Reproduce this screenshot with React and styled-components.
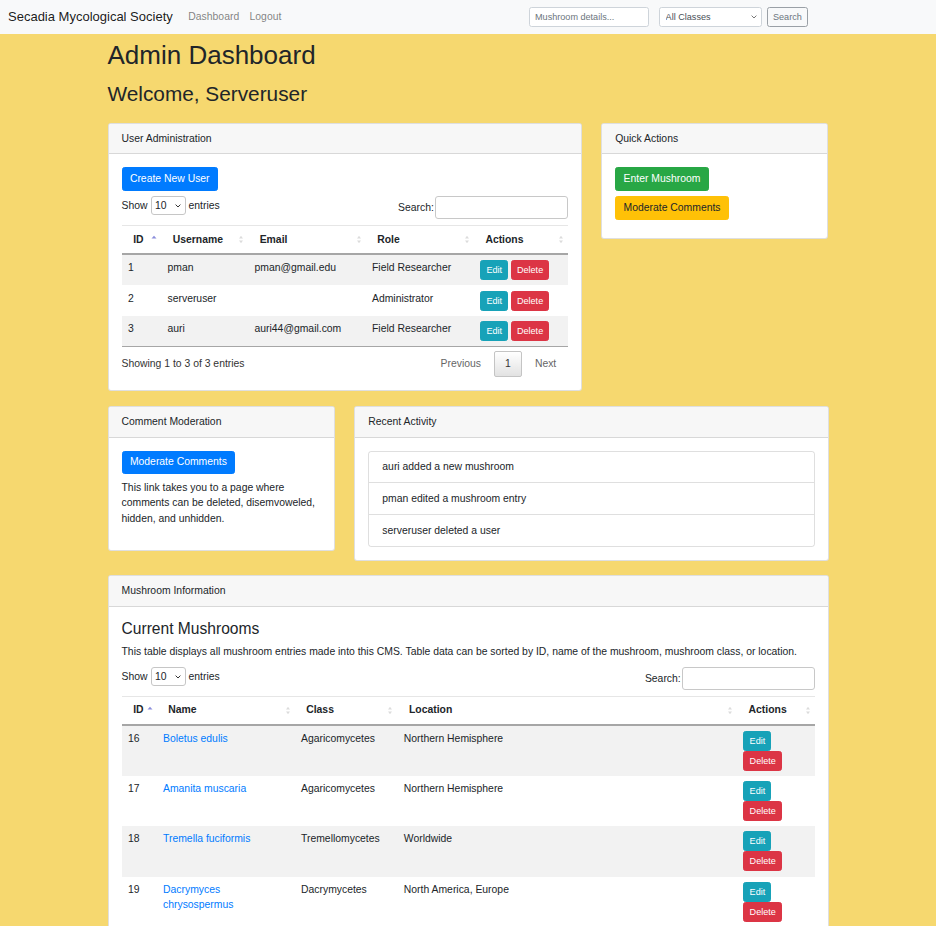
import React from 'react';
import styled, { createGlobalStyle } from 'styled-components';

const GlobalStyle = createGlobalStyle`
  html { scrollbar-width: none; }
  html::-webkit-scrollbar, body::-webkit-scrollbar { display: none; }
  * { box-sizing: border-box; }
  body {
    margin: 0;
    background: #f6d86f;
    font-family: "Liberation Sans", Arial, sans-serif;
    font-size: 10.4px;
    line-height: 15.6px;
    color: #212529;
  }
`;

/* ---------- Navbar ---------- */
const Navbar = styled.nav`
  display: flex;
  align-items: center;
  height: 34px;
  padding-left: 8px;
  background: #f8f9fa;
`;
const Brand = styled.a`
  font-size: 13px;
  line-height: 19.5px;
  color: rgba(0, 0, 0, 0.9);
  text-decoration: none;
  margin-right: 10.4px;
`;
const NavLinks = styled.div`
  display: flex;
  flex: 1;
`;
const NavLink = styled.a`
  padding: 0 5.2px;
  color: rgba(0, 0, 0, 0.5);
  text-decoration: none;
`;
const NavForm = styled.form`
  display: flex;
  align-items: center;
  margin-right: 128px;
`;
const NavInput = styled.input`
  width: 120.6px;
  height: 19.4px;
  padding: 0 5.2px;
  border: 1px solid #ced4da;
  border-radius: 2.6px;
  font: 9.1px "Liberation Sans", Arial, sans-serif;
  color: #495057;
  background: #fff;
  margin-right: 10px;
  &::placeholder { color: #6c757d; }
`;
const SelectWrap = styled.div`
  position: relative;
  display: inline-flex;
`;
const NavSelect = styled.select`
  appearance: none;
  width: 102.4px;
  height: 19.4px;
  padding: 0 5.2px;
  border: 1px solid #ced4da;
  border-radius: 2.6px;
  font: 9.1px "Liberation Sans", Arial, sans-serif;
  color: #495057;
  background: #fff;
`;
const Chevron = styled.svg`
  position: absolute;
  right: ${p => p.$right}px;
  top: 50%;
  margin-top: -2px;
  pointer-events: none;
`;
const NavButton = styled.button`
  height: 20px;
  margin-left: 5px;
  padding: 0 5.2px;
  border: 1px solid #9aa0a6;
  border-radius: 2.6px;
  background: #f8f9fa;
  color: #6c757d;
  font: 9.1px "Liberation Sans", Arial, sans-serif;
`;

/* ---------- Page ---------- */
const Container = styled.main`
  width: 721px;
  margin: 0 auto;
  padding-top: 5.7px;
`;
const Title = styled.h1`
  margin: 0 0 11px;
  font-size: 26px;
  line-height: 1.2;
  font-weight: 500;
`;
const Welcome = styled.h2`
  margin: 0 0 16px;
  font-size: 20.8px;
  line-height: 1.2;
  font-weight: 500;
`;
const Row = styled.div`
  display: grid;
  grid-template-columns: repeat(12, 1fr);
  column-gap: 19.5px;
  align-items: start;
  margin-bottom: 14.5px;
`;
const Col = styled.div`
  grid-column: span ${p => p.$span};
`;
const Card = styled.section`
  background: #fff;
  border: 1px solid rgba(0, 0, 0, 0.125);
  border-radius: 3px;
  overflow: hidden;
`;
const CardHeader = styled.div`
  padding: 7px 13px;
  background: #f7f7f7;
  border-bottom: 1px solid rgba(0, 0, 0, 0.125);
`;
const CardBody = styled.div`
  padding: 13px;
`;
const Btn = styled.button`
  display: block;
  height: 23.4px;
  margin-bottom: 5.6px;
  padding: 0 7.4px;
  border: 1px solid ${p => p.$bg};
  border-radius: 2.6px;
  background: ${p => p.$bg};
  color: ${p => p.$fg || '#fff'};
  font: 10.4px/15.6px "Liberation Sans", Arial, sans-serif;
`;
const SmallBtn = styled.button`
  height: 20px;
  padding: 0 5.2px;
  border: 1px solid ${p => p.$bg};
  border-radius: 2.6px;
  background: ${p => p.$bg};
  color: #fff;
  font: 9.1px/18px "Liberation Sans", Arial, sans-serif;
`;
const BtnGroup = styled.div`
  display: flex;
  flex-direction: ${p => (p.$stack ? 'column' : 'row')};
  align-items: flex-start;
  gap: ${p => (p.$stack ? '0' : '2.5px')};
`;
const Paragraph = styled.p`
  margin: 0 0 ${p => p.$mb}px;
`;
const SubTitle = styled.h4`
  margin: 0 0 5.2px;
  font-size: 15.6px;
  line-height: 1.2;
  font-weight: 500;
`;

/* ---------- DataTable ---------- */
const DtTop = styled.div`
  display: flex;
  justify-content: space-between;
  align-items: flex-start;
`;
const DtLength = styled.label`
  display: flex;
  align-items: center;
  gap: 3px;
`;
const LenSelect = styled.select`
  appearance: none;
  width: 35px;
  height: 18.3px;
  padding: 0 3.4px;
  border: 1px solid #c6c6c6;
  border-radius: 3px;
  background: #fff;
  color: #212529;
  font: 10.4px "Liberation Sans", Arial, sans-serif;
`;
const DtFilter = styled.label`
  display: flex;
  align-items: center;
  gap: 1.5px;
`;
const FilterInput = styled.input`
  width: 132.3px;
  height: 22.6px;
  border: 1px solid #c8c8c8;
  border-radius: 3px;
  background: #fff;
`;
const Table = styled.table`
  width: 100%;
  margin-top: ${p => p.$mt}px;
  border-collapse: collapse;
  table-layout: fixed;
  border-bottom: 1.5px solid #a6a6a6;
`;
const Th = styled.th`
  padding: 5.7px 4px 5.7px 11.7px;
  border-top: 1px solid #e6e6e6;
  border-bottom: 2px solid #a6a6a6;
  text-align: left;
  font-weight: bold;
  vertical-align: bottom;
`;
const ThInner = styled.div`
  display: flex;
  align-items: center;
  justify-content: space-between;
`;
const Tr = styled.tr`
  background: ${p => (p.$striped ? '#f2f2f2' : '#fff')};
`;
const Td = styled.td`
  padding: 5.2px 6.5px;
  vertical-align: top;
`;
const NameLink = styled.a`
  color: #007bff;
  text-decoration: none;
`;
const DtBottom = styled.div`
  display: flex;
  justify-content: space-between;
  align-items: center;
  margin-top: 4px;
  color: #333;
`;
const Pager = styled.div`
  display: flex;
  gap: 1.3px;
`;
const PageBtn = styled.span`
  padding: 4.4px 10.4px;
  border: 1px solid ${p => (p.$current ? '#c4c4c4' : 'transparent')};
  border-radius: 2px;
  background: ${p => (p.$current ? 'linear-gradient(#ffffff, #e2e2e2)' : 'transparent')};
  color: ${p => (p.$current ? '#333' : '#666')};
`;

/* ---------- List group ---------- */
const ListGroup = styled.ul`
  margin: 0;
  padding: 0;
  list-style: none;
  border: 1px solid rgba(0, 0, 0, 0.125);
  border-radius: 3px;
`;
const ListItem = styled.li`
  padding: 7.6px 13px;
  & + & { border-top: 1px solid rgba(0, 0, 0, 0.125); }
`;

const SortIcon = ({ asc }) =>
  asc ? (
    <svg width="6" height="9" viewBox="0 0 6 9">
      <path d="M0.5 3.6 L3 0.8 L5.5 3.6 Z" fill="#8b8edb" />
    </svg>
  ) : (
    <svg width="6" height="9" viewBox="0 0 6 9">
      <path d="M1 3.6 L3 0.8 L5 3.6 Z M1 5.4 L3 8.2 L5 5.4 Z" fill="#dcdcdc" />
    </svg>
  );

const ChevronIcon = ({ right, color }) => (
  <Chevron $right={right} width="6" height="4" viewBox="0 0 6 4">
    <path d="M0.6 0.6 L3 3 L5.4 0.6" fill="none" stroke={color} strokeWidth="1" />
  </Chevron>
);

const HeaderCell = ({ label, asc }) => (
  <Th>
    <ThInner>
      <span>{label}</span>
      <SortIcon asc={asc} />
    </ThInner>
  </Th>
);

const LengthControl = () => (
  <DtLength>
    Show
    <SelectWrap>
      <LenSelect defaultValue="10">
        <option>10</option>
        <option>25</option>
      </LenSelect>
      <ChevronIcon right={5} color="#333" />
    </SelectWrap>
    entries
  </DtLength>
);

const FilterControl = () => (
  <DtFilter>
    Search:
    <FilterInput type="search" />
  </DtFilter>
);

const users = [
  { id: 1, name: 'pman', email: 'pman@gmail.edu', role: 'Field Researcher' },
  { id: 2, name: 'serveruser', email: '', role: 'Administrator' },
  { id: 3, name: 'auri', email: 'auri44@gmail.com', role: 'Field Researcher' },
];

const mushrooms = [
  { id: 16, name: 'Boletus edulis', cls: 'Agaricomycetes', loc: 'Northern Hemisphere' },
  { id: 17, name: 'Amanita muscaria', cls: 'Agaricomycetes', loc: 'Northern Hemisphere' },
  { id: 18, name: 'Tremella fuciformis', cls: 'Tremellomycetes', loc: 'Worldwide' },
  { id: 19, name: 'Dacrymyces chrysospermus', cls: 'Dacrymycetes', loc: 'North America, Europe' },
];

const activity = ['auri added a new mushroom', 'pman edited a mushroom entry', 'serveruser deleted a user'];

export default function App() {
  return (
    <>
      <GlobalStyle />
      <Navbar>
        <Brand href="#">Secadia Mycological Society</Brand>
        <NavLinks>
          <NavLink href="#">Dashboard</NavLink>
          <NavLink href="#">Logout</NavLink>
        </NavLinks>
        <NavForm onSubmit={e => e.preventDefault()}>
          <NavInput placeholder="Mushroom details..." />
          <SelectWrap>
            <NavSelect defaultValue="all">
              <option value="all">All Classes</option>
            </NavSelect>
            <ChevronIcon right={5} color="#777" />
          </SelectWrap>
          <NavButton type="submit">Search</NavButton>
        </NavForm>
      </Navbar>

      <Container>
        <Title>Admin Dashboard</Title>
        <Welcome>Welcome, Serveruser</Welcome>

        <Row>
          <Col $span={8}>
            <Card>
              <CardHeader>User Administration</CardHeader>
              <CardBody>
                <Btn $bg="#007bff">Create New User</Btn>
                <DtTop>
                  <LengthControl />
                  <FilterControl />
                </DtTop>
                <Table $mt={6}>
                  <colgroup>
                    <col style={{ width: '39.5px' }} />
                    <col style={{ width: '87px' }} />
                    <col style={{ width: '117.5px' }} />
                    <col style={{ width: '108.2px' }} />
                    <col />
                  </colgroup>
                  <thead>
                    <tr>
                      <HeaderCell label="ID" asc />
                      <HeaderCell label="Username" />
                      <HeaderCell label="Email" />
                      <HeaderCell label="Role" />
                      <HeaderCell label="Actions" />
                    </tr>
                  </thead>
                  <tbody>
                    {users.map((u, i) => (
                      <Tr key={u.id} $striped={i % 2 === 0}>
                        <Td>{u.id}</Td>
                        <Td>{u.name}</Td>
                        <Td>{u.email}</Td>
                        <Td>{u.role}</Td>
                        <Td>
                          <BtnGroup>
                            <SmallBtn $bg="#17a2b8">Edit</SmallBtn>
                            <SmallBtn $bg="#dc3545">Delete</SmallBtn>
                          </BtnGroup>
                        </Td>
                      </Tr>
                    ))}
                  </tbody>
                </Table>
                <DtBottom>
                  <span>Showing 1 to 3 of 3 entries</span>
                  <Pager>
                    <PageBtn>Previous</PageBtn>
                    <PageBtn $current>1</PageBtn>
                    <PageBtn>Next</PageBtn>
                  </Pager>
                </DtBottom>
              </CardBody>
            </Card>
          </Col>
          <Col $span={4}>
            <Card>
              <CardHeader>Quick Actions</CardHeader>
              <CardBody>
                <Btn $bg="#28a745">Enter Mushroom</Btn>
                <Btn $bg="#ffc107" $fg="#212529">Moderate Comments</Btn>
              </CardBody>
            </Card>
          </Col>
        </Row>

        <Row>
          <Col $span={4}>
            <Card>
              <CardHeader>Comment Moderation</CardHeader>
              <CardBody>
                <Btn $bg="#007bff">Moderate Comments</Btn>
                <Paragraph $mb={10.4}>
                  This link takes you to a page where comments can be deleted, disemvoweled, hidden, and unhidden.
                </Paragraph>
              </CardBody>
            </Card>
          </Col>
          <Col $span={8}>
            <Card>
              <CardHeader>Recent Activity</CardHeader>
              <CardBody>
                <ListGroup>
                  {activity.map(a => (
                    <ListItem key={a}>{a}</ListItem>
                  ))}
                </ListGroup>
              </CardBody>
            </Card>
          </Col>
        </Row>

        <Row>
          <Col $span={12}>
            <Card>
              <CardHeader>Mushroom Information</CardHeader>
              <CardBody>
                <SubTitle>Current Mushrooms</SubTitle>
                <Paragraph $mb={8}>
                  This table displays all mushroom entries made into this CMS. Table data can be sorted by ID, name of the mushroom, mushroom class, or location.
                </Paragraph>
                <DtTop>
                  <LengthControl />
                  <FilterControl />
                </DtTop>
                <Table $mt={5.5}>
                  <colgroup>
                    <col style={{ width: '35px' }} />
                    <col style={{ width: '138px' }} />
                    <col style={{ width: '102.8px' }} />
                    <col style={{ width: '339.6px' }} />
                    <col />
                  </colgroup>
                  <thead>
                    <tr>
                      <HeaderCell label="ID" asc />
                      <HeaderCell label="Name" />
                      <HeaderCell label="Class" />
                      <HeaderCell label="Location" />
                      <HeaderCell label="Actions" />
                    </tr>
                  </thead>
                  <tbody>
                    {mushrooms.map((m, i) => (
                      <Tr key={m.id} $striped={i % 2 === 0}>
                        <Td>{m.id}</Td>
                        <Td>
                          <NameLink href="#">{m.name}</NameLink>
                        </Td>
                        <Td>{m.cls}</Td>
                        <Td>{m.loc}</Td>
                        <Td>
                          <BtnGroup $stack>
                            <SmallBtn $bg="#17a2b8">Edit</SmallBtn>
                            <SmallBtn $bg="#dc3545">Delete</SmallBtn>
                          </BtnGroup>
                        </Td>
                      </Tr>
                    ))}
                  </tbody>
                </Table>
              </CardBody>
            </Card>
          </Col>
        </Row>
      </Container>
    </>
  );
}
